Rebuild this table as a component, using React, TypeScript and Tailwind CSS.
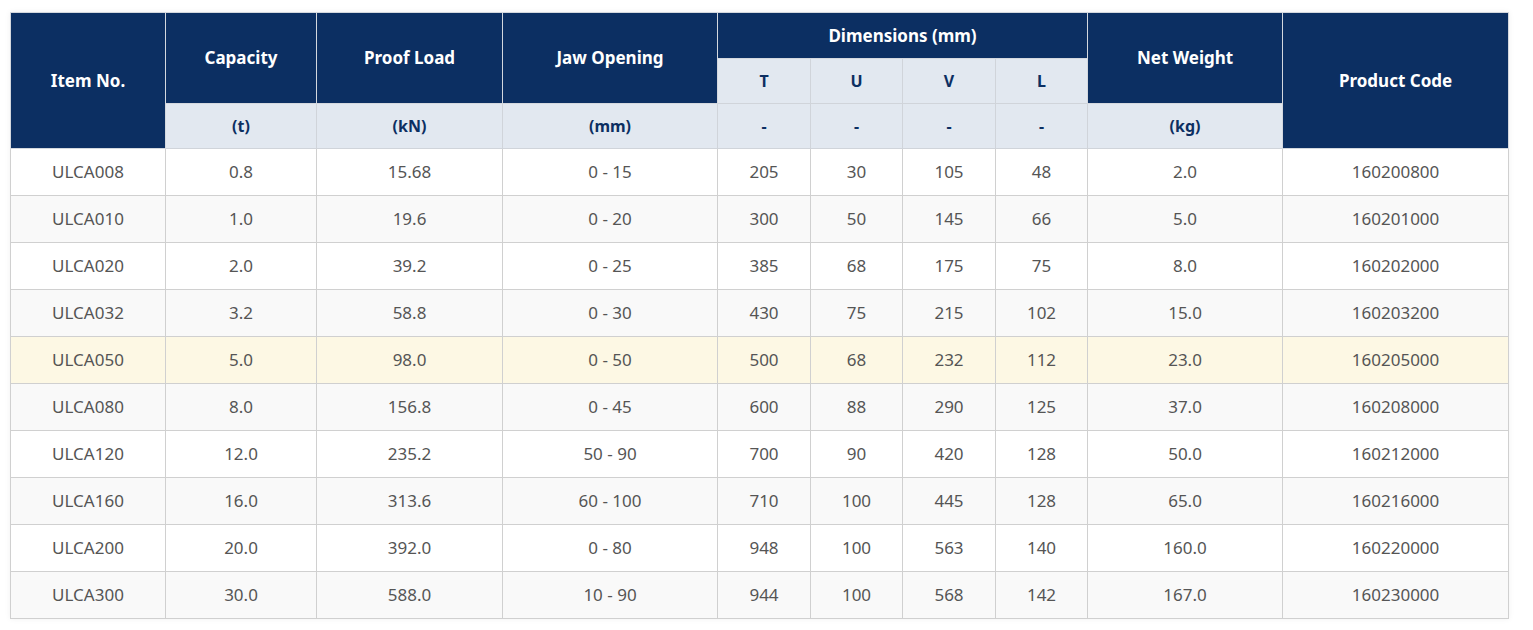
const rows = [
  ["ULCA008", "0.8", "15.68", "0 - 15", "205", "30", "105", "48", "2.0", "160200800"],
  ["ULCA010", "1.0", "19.6", "0 - 20", "300", "50", "145", "66", "5.0", "160201000"],
  ["ULCA020", "2.0", "39.2", "0 - 25", "385", "68", "175", "75", "8.0", "160202000"],
  ["ULCA032", "3.2", "58.8", "0 - 30", "430", "75", "215", "102", "15.0", "160203200"],
  ["ULCA050", "5.0", "98.0", "0 - 50", "500", "68", "232", "112", "23.0", "160205000"],
  ["ULCA080", "8.0", "156.8", "0 - 45", "600", "88", "290", "125", "37.0", "160208000"],
  ["ULCA120", "12.0", "235.2", "50 - 90", "700", "90", "420", "128", "50.0", "160212000"],
  ["ULCA160", "16.0", "313.6", "60 - 100", "710", "100", "445", "128", "65.0", "160216000"],
  ["ULCA200", "20.0", "392.0", "0 - 80", "948", "100", "563", "140", "160.0", "160220000"],
  ["ULCA300", "30.0", "588.0", "10 - 90", "944", "100", "568", "142", "167.0", "160230000"],
];

const widths = [155, 151, 186, 215, 93, 92, 93, 92, 195, 226];

const dark = "bg-[#0c2f62] text-white font-bold text-[17px] border border-[#d4d8de] text-center align-middle";
const light = "bg-[#e2e8f0] text-[#0c2f62] font-bold text-[16px] border border-[#d0d4da] text-center align-middle";

export default function App() {
  return (
    <div className="bg-white min-h-screen pt-[12px] pl-[10px]" style={{ fontFamily: '"Noto Sans", "Open Sans", sans-serif' }}>
      <table className="table-fixed border-collapse w-[1498px] shadow-[0_0_6px_rgba(0,0,0,0.06)]">
        <colgroup>
          {widths.map((w, i) => (
            <col key={i} style={{ width: w }} />
          ))}
        </colgroup>
        <thead>
          <tr className="h-[46px]">
            <th rowSpan={3} className={dark}>Item No.</th>
            <th rowSpan={2} className={dark}>Capacity</th>
            <th rowSpan={2} className={dark}>Proof Load</th>
            <th rowSpan={2} className={dark}>Jaw Opening</th>
            <th colSpan={4} className={dark}>Dimensions (mm)</th>
            <th rowSpan={2} className={dark}>Net Weight</th>
            <th rowSpan={3} className={dark}>Product Code</th>
          </tr>
          <tr className="h-[45px]">
            {["T", "U", "V", "L"].map((d) => (
              <th key={d} className={light}>{d}</th>
            ))}
          </tr>
          <tr className="h-[45px]">
            {["(t)", "(kN)", "(mm)", "-", "-", "-", "-", "(kg)"].map((u, i) => (
              <th key={i} className={light}>{u}</th>
            ))}
          </tr>
        </thead>
        <tbody>
          {rows.map((r, i) => (
            <tr
              key={r[0]}
              className={`h-[47px] ${r[0] === "ULCA050" ? "bg-[#fdf8e4]" : i % 2 === 1 ? "bg-[#f9f9f9]" : "bg-white"}`}
            >
              {r.map((c, j) => (
                <td key={j} className="border border-[#d0d0d0] text-center align-middle text-[17px] text-[#555555]">
                  {c}
                </td>
              ))}
            </tr>
          ))}
        </tbody>
      </table>
    </div>
  );
}
